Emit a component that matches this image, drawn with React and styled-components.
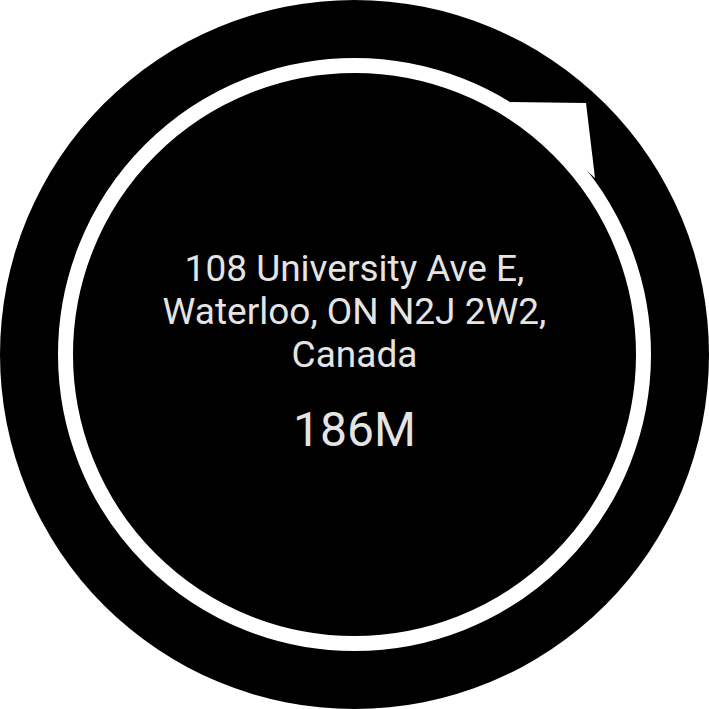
import styled, { createGlobalStyle } from "styled-components";

const GlobalStyle = createGlobalStyle`
  html, body {
    margin: 0;
    padding: 0;
    background: #ffffff;
  }
`;

const Face = styled.div`
  position: relative;
  width: 709px;
  height: 709px;
  border-radius: 50%;
  background: #000000;
  display: flex;
  align-items: center;
  justify-content: center;
  overflow: hidden;
`;

const Ring = styled.svg`
  position: absolute;
  inset: 0;
  width: 709px;
  height: 709px;
`;

const Info = styled.div`
  display: flex;
  flex-direction: column;
  align-items: center;
  gap: 26px;
  font-family: Roboto, "Liberation Sans", sans-serif;
  color: #e4e4e4;
  text-align: center;
  margin-top: ${(props) => props.offset || 0}px;
`;

const Address = styled.div`
  font-size: 37px;
  line-height: 43px;
`;

const Distance = styled.div`
  font-size: 48px;
  line-height: 56px;
`;

const App = () => {
  return (
    <>
      <GlobalStyle />
      <Face>
        <Ring viewBox="0 0 709 709">
          <circle
            cx="354.5"
            cy="354.5"
            r="289"
            fill="none"
            stroke="#ffffff"
            strokeWidth="15"
          />
          {/* heading pointer */}
          <polygon points="510,102 586,103 595,178" fill="#ffffff" />
        </Ring>
        <Info offset={-4}>
          <Address>
            108 University Ave E,
            <br />
            Waterloo, ON N2J 2W2,
            <br />
            Canada
          </Address>
          <Distance>186M</Distance>
        </Info>
      </Face>
    </>
  );
};

export default App;
